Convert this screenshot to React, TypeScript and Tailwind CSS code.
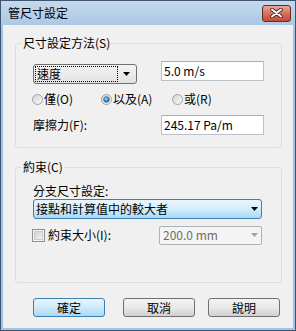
import React from 'react';

function Arrow({ color = '#000' }: { color?: string }) {
  return (
    <svg width="7" height="4" viewBox="0 0 7 4">
      <polygon points="0,0 7,0 3.5,4" fill={color} />
    </svg>
  );
}

function Radio({ checked }: { checked?: boolean }) {
  return (
    <svg width="11" height="11" viewBox="0 0 11 11">
      <defs>
        <linearGradient id="radioBg" x1="0" y1="0" x2="1" y2="1">
          <stop offset="0" stopColor="#d2d2d2" />
          <stop offset="1" stopColor="#fbfbfb" />
        </linearGradient>
        <radialGradient id="radioDot" cx="0.4" cy="0.35" r="0.7">
          <stop offset="0" stopColor="#9ee0fb" />
          <stop offset="0.6" stopColor="#3a8fd3" />
          <stop offset="1" stopColor="#1c5d9a" />
        </radialGradient>
      </defs>
      <circle cx="5.5" cy="5.5" r="5" fill="url(#radioBg)" stroke="#a2a2a2" strokeWidth="1" />
      {checked && <circle cx="5.5" cy="5.5" r="2.8" fill="url(#radioDot)" stroke="#1b4f86" strokeWidth="0.7" />}
    </svg>
  );
}

function Checkbox() {
  return (
    <svg width="13" height="13" viewBox="0 0 13 13">
      <defs>
        <linearGradient id="chkBg" x1="0" y1="0" x2="1" y2="1">
          <stop offset="0" stopColor="#cbcfd5" />
          <stop offset="1" stopColor="#f4f4f4" />
        </linearGradient>
      </defs>
      <rect x="0.5" y="0.5" width="12" height="12" fill="#f4f4f4" stroke="#8e8f8f" />
      <rect x="2.5" y="2.5" width="8" height="8" fill="url(#chkBg)" stroke="#c9cbce" />
    </svg>
  );
}

function CloseGlyph() {
  return (
    <svg width="13" height="10" viewBox="0 0 13 10">
      <path d="M2 1.5 L11 8.5 M11 1.5 L2 8.5" stroke="#4b1d16" strokeWidth="3.6" strokeLinecap="round" />
      <path d="M2 1.5 L11 8.5 M11 1.5 L2 8.5" stroke="#ffffff" strokeWidth="2" strokeLinecap="round" />
    </svg>
  );
}

export default function App() {
  return (
    <div className="w-[296px] h-[331px] flex flex-col border border-[#3f556d] bg-[#9fc4ea] font-['Noto_Sans_CJK_TC','Noto_Sans',sans-serif] text-[12px] leading-[14px] text-black">
      {/* title bar */}
      <div className="h-[24px] shrink-0 flex items-center justify-between pl-[7px] pr-[4px] bg-linear-to-b from-[#c6d8ec] to-[#aac8e8]">
        <span className="text-[12px]">管尺寸設定</span>
        <div className="w-[29px] h-[17px] rounded-[3px] border border-[#6a2a22] bg-linear-to-b from-[#eaa898] via-[#d4705c] to-[#c44b36] flex items-center justify-center">
          <CloseGlyph />
        </div>
      </div>

      {/* body */}
      <div className="flex-1 mx-[2px] mb-[2px] bg-[#f0f0f0] pl-[12px] pr-[11px]">
        <fieldset className="mt-[11px] border border-[#d5dfe5] rounded-[3px]">
          <legend className="ml-[6px] px-[1px] leading-[14px]">尺寸設定方法(S)</legend>
          <div className="pl-[17px] pb-[12px]">
            <div className="mt-[11px] flex items-start">
              <div className="mt-[3px] w-[104px] h-[20px] rounded-[3px] border border-[#707070] bg-linear-to-b from-[#f4f4f4] to-[#e2e2e2] flex items-center p-[1px]">
                <div className="flex-1 h-full border border-dotted border-black flex items-center pl-[1px]">速度</div>
                <div className="w-[17px] flex justify-center">
                  <Arrow />
                </div>
              </div>
              <div className="ml-[24px] w-[103px] h-[20px] border border-[#bcc1c8] border-t-[#abadb3] bg-white flex items-center pl-[2px]">5.0 m/s</div>
            </div>

            <div className="mt-[8px] -ml-[1px] h-[14px] flex items-center">
              <label className="w-[69px] flex items-center gap-[1px]">
                <Radio />
                <span>僅(O)</span>
              </label>
              <label className="w-[71px] flex items-center gap-[1px]">
                <Radio checked />
                <span>以及(A)</span>
              </label>
              <label className="flex items-center gap-[1px]">
                <Radio />
                <span>或(R)</span>
              </label>
            </div>

            <div className="mt-[9px] flex items-center">
              <span className="w-[128px]">摩擦力(F):</span>
              <div className="w-[103px] h-[20px] border border-[#bcc1c8] border-t-[#abadb3] bg-white flex items-center pl-[2px]">245.17 Pa/m</div>
            </div>
          </div>
        </fieldset>

        <fieldset className="mt-[12px] border border-[#d5dfe5] rounded-[3px]">
          <legend className="ml-[6px] px-[1px] leading-[14px]">約束(C)</legend>
          <div className="pl-[17px] pb-[37px]">
            <div className="mt-[10px]">分支尺寸設定:</div>
            <div className="mt-[1px] w-[229px] h-[20px] rounded-[3px] border border-[#3c7fb1] bg-linear-to-b from-[#eaf6fd] via-[#d3eefc] to-[#a7d9f5] flex items-center pl-[2px]">
              <span className="flex-1">接點和計算值中的較大者</span>
              <div className="w-[14px] flex justify-center">
                <Arrow />
              </div>
            </div>
            <div className="mt-[6px] h-[20px] -ml-[1px] flex items-center">
              <label className="w-[127px] flex items-center gap-[3px]">
                <Checkbox />
                <span>約束大小(I):</span>
              </label>
              <div className="w-[103px] h-[19px] rounded-[2px] border border-[#adb2b5] bg-[#f4f4f4] flex items-center pl-[3px] text-[#6d6d6d]">
                <span className="flex-1">200.0 mm</span>
                <div className="w-[14px] flex justify-center">
                  <Arrow color="#a0a0a0" />
                </div>
              </div>
            </div>
          </div>
        </fieldset>

        <div className="mt-[15px] pl-[18px] flex">
          <button className="w-[72px] h-[19px] rounded-[3px] border border-[#3c7fb1] bg-linear-to-b from-[#e6f4fc] via-[#cfeafa] to-[#a9d9f4] flex items-center justify-center">確定</button>
          <button className="ml-[18px] w-[72px] h-[19px] rounded-[3px] border border-[#707070] bg-linear-to-b from-[#f3f3f3] via-[#e9e9e9] to-[#d0d0d0] flex items-center justify-center">取消</button>
          <button className="ml-[13px] w-[72px] h-[19px] rounded-[3px] border border-[#707070] bg-linear-to-b from-[#f3f3f3] via-[#e9e9e9] to-[#d0d0d0] flex items-center justify-center">說明</button>
        </div>
      </div>
    </div>
  );
}
